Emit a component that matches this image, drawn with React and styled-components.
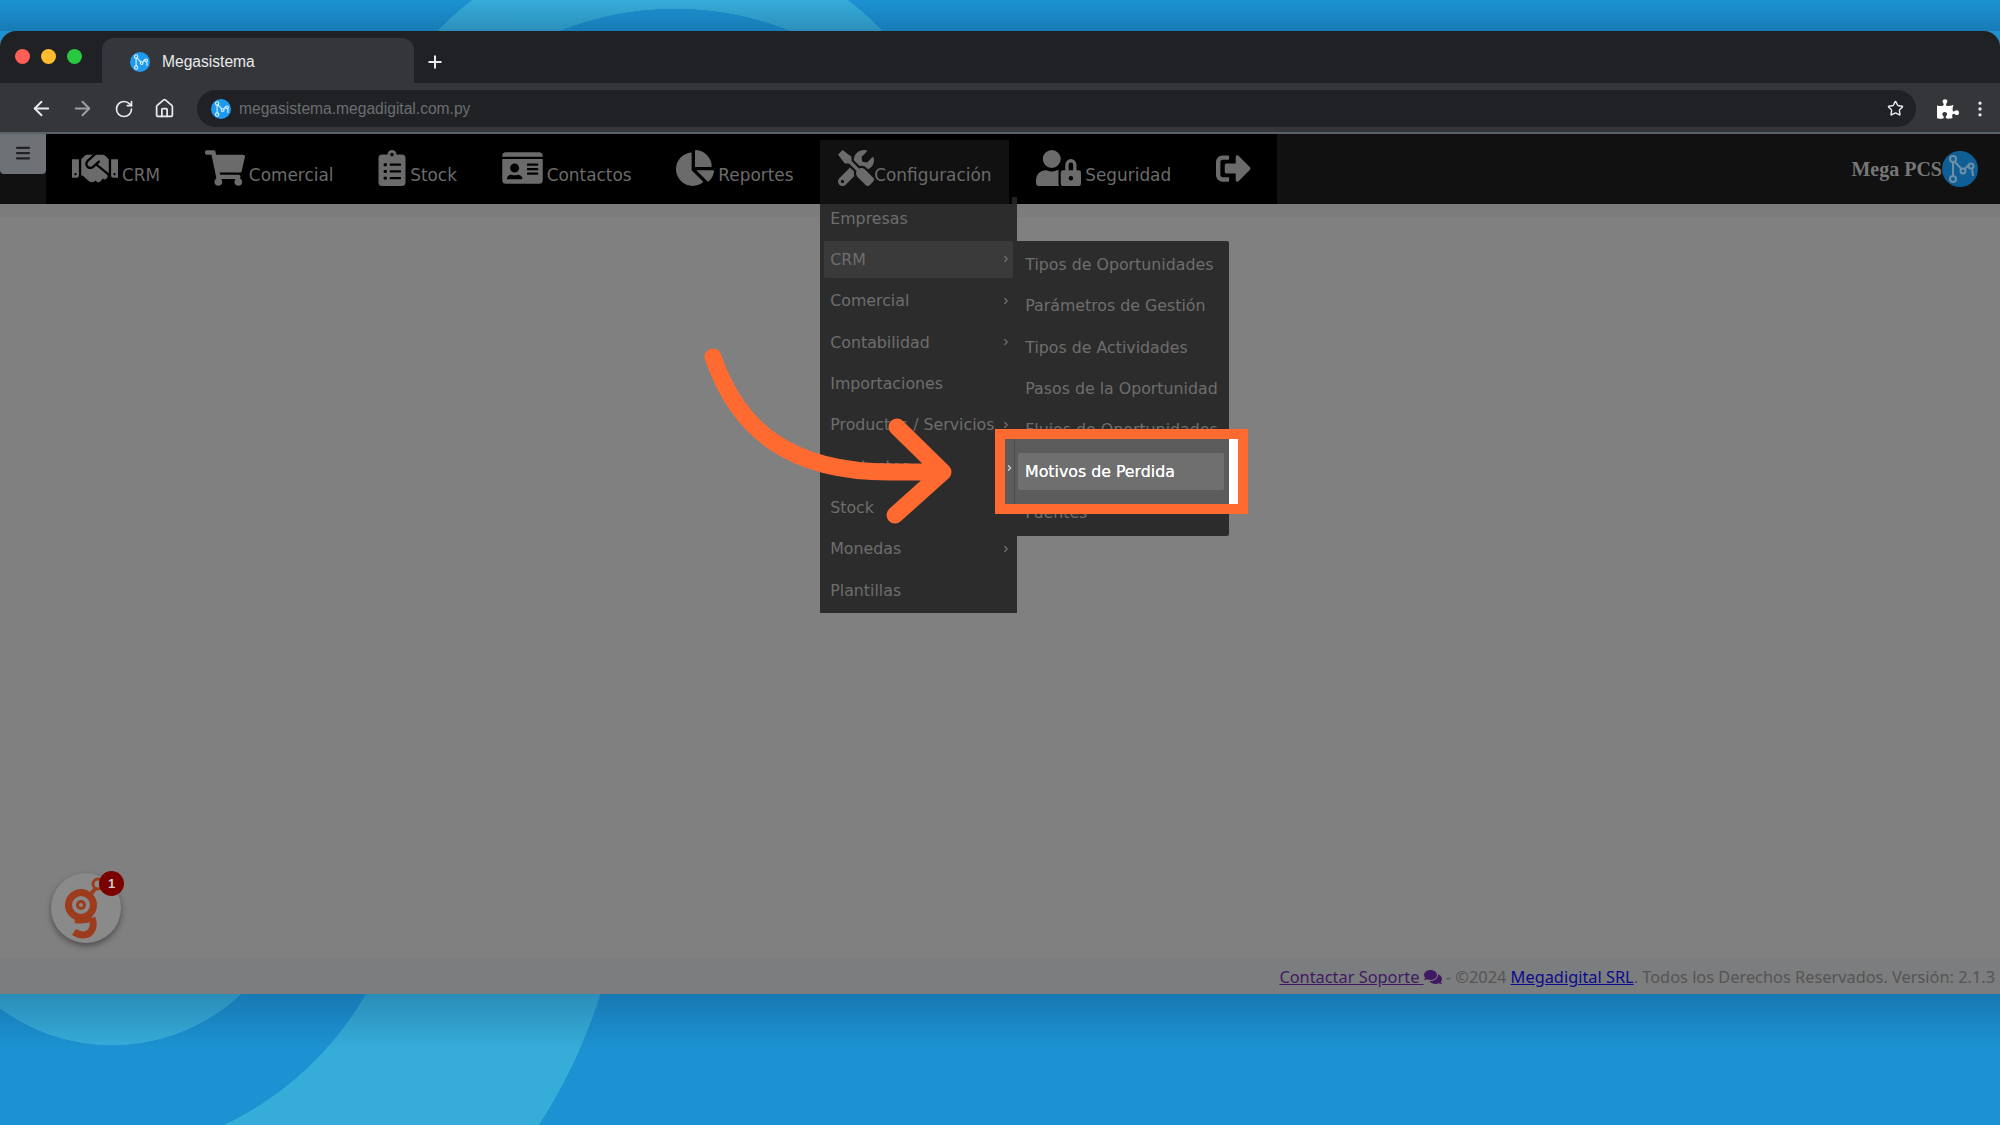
import React from 'react'
import styled, { createGlobalStyle } from 'styled-components'
import { ArrowLeft, ArrowRight, RotateCw, House, Star, Plus, ChevronRight, EllipsisVertical, Menu } from 'lucide-react'
import {
  FaHandshake, FaShoppingCart, FaClipboardList, FaIdCard, FaChartPie,
  FaTools, FaUserLock, FaSignOutAlt, FaPuzzlePiece, FaComments,
} from 'react-icons/fa'

const GlobalStyle = createGlobalStyle`
  html, body {
    margin: 0;
    padding: 0;
    width: 2000px;
    height: 1125px;
    overflow: hidden;
  }
  * { box-sizing: border-box; }
`

const Page = styled.div`
  position: relative;
  width: 2000px;
  height: 1125px;
  padding-top: 31px;
  background:
    linear-gradient(180deg,
      rgba(10, 50, 90, 0) 0, rgba(10, 50, 90, .24) 31px, transparent 31px,
      transparent 994px, rgba(10, 50, 90, .26) 994px, rgba(10, 50, 90, 0) 1048px),
    radial-gradient(circle at 112px 857px, #36acd9 188px, transparent 188.5px),
    radial-gradient(circle at 85px 832px, transparent 324px, #36acd9 324.5px, #36acd9 540px, transparent 540.5px),
    radial-gradient(circle at 675px 320px, #1c92d2 311px, transparent 311.5px),
    radial-gradient(circle at 660px 247px, #36acd9 310px, transparent 310.5px),
    #1c92d2;
`

const Window = styled.div`
  display: flex;
  flex-direction: column;
  height: 963px;
  border-radius: 16px 16px 0 0;
  overflow: hidden;
  background: #808080;
`

const TabStrip = styled.div`
  display: flex;
  align-items: flex-end;
  height: 52px;
  flex-shrink: 0;
  background: #202124;
`

const Lights = styled.div`
  display: flex;
  gap: 11px;
  width: 102px;
  height: 100%;
  padding: 18px 0 0 15px;
`

const Light = styled.span`
  width: 15px;
  height: 15px;
  border-radius: 50%;
  background: ${p => p.$color};
`

const Tab = styled.div`
  display: flex;
  align-items: center;
  gap: 12px;
  width: 312px;
  height: 45px;
  padding: 2px 0 0 28px;
  border-radius: 12px 12px 0 0;
  background: #35363a;
  color: #e8eaed;
  font: 15.6px "Liberation Sans", Arial, sans-serif;
`

const NewTab = styled.div`
  display: flex;
  align-items: center;
  justify-content: center;
  width: 42px;
  height: 45px;
  padding-top: 2px;
  color: #e8eaed;
`

const Toolbar = styled.div`
  display: flex;
  align-items: center;
  height: 51px;
  flex-shrink: 0;
  padding: 2px 0 0 21px;
  background: #35363a;
  border-bottom: 2px solid #5b6168;
`

const ToolButton = styled.div`
  display: flex;
  align-items: center;
  justify-content: center;
  width: ${p => p.$w || 41}px;
  color: ${p => p.$color || '#e8eaed'};
`

const UrlBar = styled.div`
  display: flex;
  align-items: center;
  flex: 1;
  gap: 8px;
  height: 37px;
  margin-left: 12px;
  padding: 0 12px 0 14px;
  border-radius: 19px;
  background: #202124;
  color: #6c6e71;
  font: 15.6px "Liberation Sans", Arial, sans-serif;
`

const UrlText = styled.span`
  flex: 1;
`

const ToolEnd = styled.div`
  display: flex;
  align-items: center;
  width: 84px;
  padding-left: 21px;
`

const NavBar = styled.div`
  display: flex;
  height: 70px;
  flex-shrink: 0;
  background: #111;
`

const SideToggle = styled.div`
  display: flex;
  align-items: center;
  justify-content: center;
  width: 46px;
  height: 40px;
  flex-shrink: 0;
  padding-bottom: 2px;
  border-radius: 0 0 4px 4px;
  background: #6e7175;
  color: #1f2124;
`

const NavList = styled.nav`
  display: flex;
  gap: 8.75px;
  height: 100%;
  padding: 6px 8px 0;
  background: #000;
`

const NavItem = styled.div`
  position: relative;
  display: flex;
  align-items: center;
  gap: ${p => p.$gap ?? 4}px;
  height: 64px;
  padding: 0 18px 8px;
  color: #6b6b6b;
  background: ${p => (p.$active ? '#111' : 'transparent')};
  font: 16.9px "DejaVu Sans", sans-serif;
`

const NavGlyph = styled.span`
  display: flex;
  flex-shrink: 0;

  svg {
    width: ${p => p.$w}px;
    height: ${p => p.$h}px;
  }
`

const NavLabel = styled.span`
  margin-top: 13px;
  white-space: nowrap;
`

const Brand = styled.div`
  display: flex;
  align-items: center;
  margin-left: auto;
  padding-right: 22px;
  color: #777;
  font: bold 20px "Liberation Serif", serif;
`

const DropMenu = styled.div`
  position: absolute;
  top: 64px;
  left: 0;
  display: flex;
  flex-direction: column;
  gap: 4px;
  width: 197px;
  padding-bottom: 4px;
  background: #2c2c2c;
  z-index: 1;

  &::before {
    content: "";
    position: absolute;
    top: -7px;
    right: 0;
    width: 5px;
    height: 7px;
    background: #222;
  }
`

const MenuRow = styled.div`
  position: relative;
  display: flex;
  align-items: center;
  justify-content: space-between;
  flex-shrink: 0;
  height: 37.35px;
  margin: 0 4px;
  padding: 0 2px 0 6px;
  border-radius: 2px;
  background: ${p => (p.$active ? '#3a3a3a' : 'transparent')};
  color: #6e6e6e;
  font: 15.8px "DejaVu Sans", sans-serif;
  white-space: nowrap;

  &:first-child {
    margin-top: -4.7px;
    padding-top: 2px;
  }
`

const SubMenu = styled.div`
  position: absolute;
  top: 0;
  left: 191px;
  width: 214px;
  padding: 3px 0;
  background: #2c2c2c;
  border-radius: 0 2px 2px 0;
`

const SubRow = styled.div`
  display: flex;
  align-items: center;
  height: 41.35px;
  padding-left: 10px;
  color: #6e6e6e;
  font: 15.8px "DejaVu Sans", sans-serif;
  white-space: nowrap;
`

const Content = styled.main`
  display: flex;
  flex: 1;
  flex-direction: column;
  background: #808080;
`

const TopBand = styled.div`
  height: 13px;
  background: #7c7c7c;
`

const Spacer = styled.div`
  flex: 1;
`

const Footer = styled.footer`
  display: flex;
  align-items: center;
  justify-content: flex-end;
  height: 36px;
  padding: 2px 5px 0 0;
  background: #7c7d7e;
  color: #555;
  font: 16.35px "Noto Sans", sans-serif;
  white-space: pre;
`

const FooterLink = styled.a`
  color: ${p => p.$color};
  text-decoration: underline;
`

const FooterIcon = styled.span`
  display: flex;
  color: #3f1a63;
`

const ChatBubble = styled.div`
  position: absolute;
  left: 51px;
  top: 873px;
  width: 70px;
  height: 70px;
  border-radius: 50%;
  background: #8a8a8a;
  box-shadow: 0 3px 6px rgba(0, 0, 0, .4);
`

const ChatBadge = styled.span`
  position: absolute;
  top: -2px;
  right: -3px;
  display: flex;
  align-items: center;
  justify-content: center;
  width: 25px;
  height: 25px;
  border-radius: 50%;
  background: #7a0000;
  color: #ccc;
  font: bold 13px "Liberation Sans", sans-serif;
`

const Spotlight = styled.div`
  position: absolute;
  left: 995px;
  top: 429px;
  display: flex;
  width: 253px;
  height: 85px;
  border: 10px solid #ff6a30;
  background: #5c5c5c;
  z-index: 5;
`

const SpotChevron = styled.div`
  display: flex;
  align-items: center;
  width: 10px;
  padding-bottom: 8px;
  color: #ddd;
  border-right: 1px solid #4c4c4c;
  overflow: hidden;
`

const SpotBody = styled.div`
  display: flex;
  flex: 1;
  align-items: center;
  padding: 0 5px 0 3px;
`

const SpotItem = styled.div`
  display: flex;
  align-items: center;
  width: 100%;
  height: 37px;
  padding-left: 7px;
  border-radius: 2px;
  background: #6f6f6f;
  color: #fff;
  font: 15.8px "DejaVu Sans", sans-serif;
  text-shadow: 0 0 .5px #fff;
  white-space: nowrap;
`

const SpotBar = styled.div`
  width: 9px;
  background: #fff;
`

const ArrowLayer = styled.svg`
  position: absolute;
  left: 0;
  top: 0;
  z-index: 6;
  pointer-events: none;
`

const MegaLogo = ({ size = 20, bg = '#1e9bf0', line = '#d8f0ff' }) => (
  <svg width={size} height={size} viewBox="0 0 36 36">
    <circle cx="18" cy="18" r="18" fill={bg} />
    <g fill="none" stroke={line} strokeWidth="2">
      <circle cx="11" cy="8" r="3" />
      <circle cx="11" cy="28" r="3" />
      <circle cx="21" cy="20" r="2.5" />
      <circle cx="29" cy="15" r="2.5" />
      <path d="M11 11v14M12.5 10.5 19.5 18M22.5 18 27.5 13.5M30 17.5 31 25" />
    </g>
  </svg>
)

const GLogo = () => (
  <svg width="70" height="70" viewBox="0 0 70 70">
    <g fill="none" stroke="#9c3c1c">
      <circle cx="30" cy="32" r="12.5" strokeWidth="7" />
      <circle cx="30" cy="32" r="3.5" strokeWidth="3" />
      <path d="M41 45c3 8 0 17-9 17-3 0-6-1-9-3" strokeWidth="7" />
      <path d="M24 47c6 1 13 0 17-2" strokeWidth="6" />
      <path d="M39 22 44 16" strokeWidth="4" />
      <circle cx="47" cy="11" r="5" strokeWidth="3" />
    </g>
  </svg>
)

const navItems = [
  { label: 'CRM', Icon: FaHandshake, w: 46, h: 37 },
  { label: 'Comercial', Icon: FaShoppingCart, w: 40, h: 36 },
  { label: 'Stock', Icon: FaClipboardList, w: 28, h: 36 },
  { label: 'Contactos', Icon: FaIdCard, w: 41, h: 36 },
  { label: 'Reportes', Icon: FaChartPie, w: 38, h: 36 },
  { label: 'Configuración', Icon: FaTools, w: 36, h: 36, active: true, gap: 0 },
  { label: 'Seguridad', Icon: FaUserLock, w: 45, h: 36 },
  { label: '', Icon: FaSignOutAlt, w: 35, h: 35, gap: 0 },
]

const menuItems = [
  { label: 'Empresas' },
  { label: 'CRM', more: true, active: true },
  { label: 'Comercial', more: true },
  { label: 'Contabilidad', more: true },
  { label: 'Importaciones' },
  { label: 'Productos / Servicios', more: true },
  { label: 'Contactos', more: true },
  { label: 'Stock' },
  { label: 'Monedas', more: true },
  { label: 'Plantillas' },
]

const crmItems = [
  'Tipos de Oportunidades',
  'Parámetros de Gestión',
  'Tipos de Actividades',
  'Pasos de la Oportunidad',
  'Flujos de Oportunidades',
  'Motivos de Perdida',
  'Fuentes',
]

export default function App() {
  return (
    <Page>
      <GlobalStyle />
      <Window>
        <TabStrip>
          <Lights>
            <Light $color="#ff5f57" />
            <Light $color="#febc2e" />
            <Light $color="#28c840" />
          </Lights>
          <Tab>
            <MegaLogo size={20} />
            Megasistema
          </Tab>
          <NewTab><Plus size={20} strokeWidth={2.4} /></NewTab>
        </TabStrip>

        <Toolbar>
          <ToolButton><ArrowLeft size={23} /></ToolButton>
          <ToolButton $color="#9aa0a6"><ArrowRight size={23} /></ToolButton>
          <ToolButton><RotateCw size={20} /></ToolButton>
          <ToolButton><House size={21} /></ToolButton>
          <UrlBar>
            <MegaLogo size={20} />
            <UrlText>megasistema.megadigital.com.py</UrlText>
            <Star size={17} color="#e8eaed" />
          </UrlBar>
          <ToolEnd>
            <ToolButton $w={24} $color="#fff"><FaPuzzlePiece size={22} /></ToolButton>
            <ToolButton $w={42} $color="#e8eaed"><EllipsisVertical size={20} /></ToolButton>
          </ToolEnd>
        </Toolbar>

        <NavBar>
          <SideToggle><Menu size={18} strokeWidth={3} /></SideToggle>
          <NavList>
            {navItems.map(({ label, Icon, w, h, active, gap }) => (
              <NavItem key={label || 'salir'} $active={active} $gap={gap}>
                <NavGlyph $w={w} $h={h}><Icon /></NavGlyph>
                {label && <NavLabel>{label}</NavLabel>}
                {active && (
                  <DropMenu>
                    {menuItems.map(item => (
                      <MenuRow key={item.label} $active={item.active}>
                        {item.label}
                        {item.more && <ChevronRight size={10} strokeWidth={3} />}
                        {item.active && (
                          <SubMenu>
                            {crmItems.map(sub => <SubRow key={sub}>{sub}</SubRow>)}
                          </SubMenu>
                        )}
                      </MenuRow>
                    ))}
                  </DropMenu>
                )}
              </NavItem>
            ))}
          </NavList>
          <Brand>
            Mega PCS
            <MegaLogo size={36} bg="#0f5f96" line="#6f8fa6" />
          </Brand>
        </NavBar>

        <Content>
          <TopBand />
          <Spacer />
          <Footer>
            <FooterLink href="#" $color="#3f1a63">Contactar Soporte </FooterLink>
            <FooterIcon><FaComments size={18} /></FooterIcon>
            {' - ©2024 '}
            <FooterLink href="#" $color="#0a0a8c">Megadigital SRL</FooterLink>
            . Todos los Derechos Reservados. Versión: 2.1.3
          </Footer>
        </Content>
      </Window>

      <ChatBubble>
        <GLogo />
        <ChatBadge>1</ChatBadge>
      </ChatBubble>

      <Spotlight>
        <SpotChevron><ChevronRight size={10} strokeWidth={3} /></SpotChevron>
        <SpotBody>
          <SpotItem>Motivos de Perdida</SpotItem>
        </SpotBody>
        <SpotBar />
      </Spotlight>

      <ArrowLayer width="2000" height="1125" viewBox="0 0 2000 1125">
        <path
          d="M713 357C738 430 790 472 890 472H940M897 427 943 472 895 515"
          fill="none"
          stroke="#ff6a30"
          strokeWidth="17"
          strokeLinecap="round"
          strokeLinejoin="round"
        />
      </ArrowLayer>
    </Page>
  )
}
